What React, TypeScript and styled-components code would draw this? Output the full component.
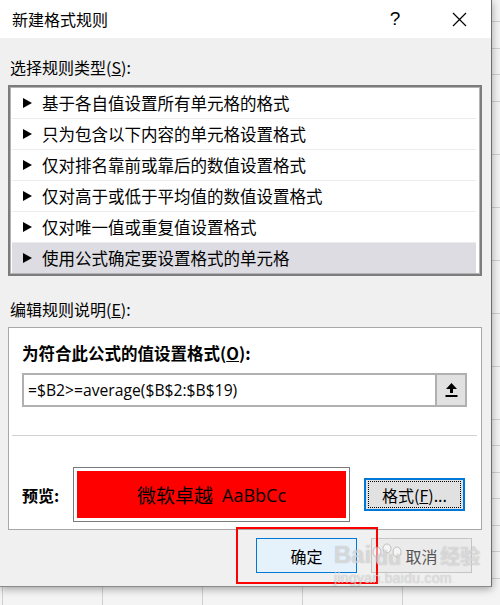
import styled, { createGlobalStyle } from "styled-components";

const GlobalStyle = createGlobalStyle`
  html, body {
    margin: 0;
    height: 100%;
  }
  body {
    font-family: "Noto Sans", "Noto Sans CJK SC", sans-serif;
    color: #000;
    background-color: #f4f4f4;
    background-image:
      repeating-linear-gradient(to bottom, transparent 0 25.5px, #d0d0d0 25.5px 26.5px),
      repeating-linear-gradient(to right, #d0d0d0 0 1px, transparent 1px 100px);
    background-position: 0 -4px, 2px 0;
    overflow: hidden;
  }
`;

const Dialog = styled.div`
  position: relative;
  width: 492px;
  height: 587px;
  box-sizing: border-box;
  background: #f0f0f0;
  border-right: 1px solid #6e6e6e;
  border-bottom: 1px solid #8a8a8a;
  box-shadow: 0 2px 8px rgba(0, 0, 0, 0.35);
  display: flex;
  flex-direction: column;
`;

const TitleBar = styled.div`
  height: 38px;
  background: #fff;
  display: flex;
  align-items: center;
  padding: 0 9px 0 12px;
  font-family: "Noto Sans CJK SC", sans-serif;
  font-size: 16px;
`;

const Title = styled.div`
  flex: 1;
`;

const HelpButton = styled.div`
  width: 46px;
  margin-right: 18px;
  text-align: center;
  font-family: "Liberation Sans", sans-serif;
  font-size: 19px;
`;

const CloseButton = styled.div`
  width: 46px;
  height: 38px;
  display: flex;
  align-items: center;
  justify-content: center;
`;

const Content = styled.div`
  flex: 1;
  padding: 0 9px 0 8px;
  display: flex;
  flex-direction: column;
`;

const SectionLabel = styled.div<{ $top: number }>`
  margin-top: ${(p) => p.$top}px;
  line-height: 22px;
  font-family: "Noto Sans CJK SC", sans-serif;
  font-size: 16px;
  padding-left: 2px;
`;

const RuleList = styled.div`
  margin-top: 7px;
  background: #fff;
  border: 2px solid #7c7c7c;
  box-shadow: inset 0 0 0 1px #b4b4b4;
  padding: 1px 4px 1px 2px;
  display: flex;
  flex-direction: column;
`;

const RuleRow = styled.div<{ $selected?: boolean }>`
  height: 30px;
  display: flex;
  align-items: center;
  padding-left: 11px;
  gap: 10px;
  background: ${(p) => (p.$selected ? "#dcdce2" : "#fff")};
  font-family: "Noto Sans CJK SC", sans-serif;
  font-size: 16.5px;
  & + & {
    border-top: 1px solid #ececec;
  }
`;

const Arrow = styled.span`
  width: 0;
  height: 0;
  border-left: 9px solid #000;
  border-top: 5px solid transparent;
  border-bottom: 5px solid transparent;
`;

const DescBox = styled.div`
  margin-top: 7px;
  background: #fff;
  border: 1px solid #a8a8a8;
  padding: 14px 14px 7px 13px;
  display: flex;
  flex-direction: column;
`;

const BoldLabel = styled.div`
  line-height: 22px;
  font-family: "Noto Sans CJK SC", sans-serif;
  font-size: 16.5px;
  font-weight: 700;
`;

const FormulaInput = styled.div`
  margin-top: 9px;
  height: 34px;
  box-sizing: border-box;
  border: 2px solid #b0b0b0;
  display: flex;
  align-items: stretch;
`;

const FormulaText = styled.div`
  flex: 1;
  display: flex;
  align-items: center;
  padding-left: 4px;
  font-family: "Open Sans", "Noto Sans", sans-serif;
  font-size: 15.7px;
`;

const CollapseButton = styled.div`
  width: 28px;
  background: #e1e1e1;
  border-left: 2px solid #b0b0b0;
  display: flex;
  align-items: center;
  justify-content: center;
`;

const Divider = styled.div`
  margin: 28px -10px 0 -10px;
  height: 1px;
  background: #d2d2d2;
`;

const PreviewRow = styled.div`
  margin-top: 31px;
  height: 55px;
  display: flex;
  align-items: center;
`;

const PreviewLabel = styled.div`
  width: 51px;
  font-family: "Noto Sans CJK SC", sans-serif;
  font-size: 16px;
  font-weight: 700;
`;

const PreviewFrame = styled.div`
  width: 277px;
  height: 55px;
  box-sizing: border-box;
  border: 1px solid #7a7a7a;
  padding: 3px;
  background: #fff;
`;

const PreviewFill = styled.div`
  height: 100%;
  background: #ff0000;
  display: flex;
  align-items: center;
  justify-content: center;
  gap: 9px;
  font-family: "Noto Sans CJK SC", sans-serif;
  font-size: 19px;
  span {
    font-family: "Open Sans", "Noto Sans", sans-serif;
    font-size: 18px;
  }
`;

const Button = styled.div<{ $variant?: "default" | "focus" | "muted" }>`
  width: 101px;
  height: 35px;
  box-sizing: border-box;
  display: flex;
  align-items: center;
  justify-content: center;
  font-family: "Noto Sans CJK SC", sans-serif;
  font-size: 16px;
  background: ${(p) =>
    p.$variant === "default" ? "#e5f1fb" : p.$variant === "muted" ? "#ebebeb" : "#e1e1e1"};
  border: ${(p) =>
    p.$variant === "focus"
      ? "2px solid #0078d7"
      : p.$variant === "default"
      ? "1px solid #0078d7"
      : "1px solid #c4c4c4"};
  color: ${(p) => (p.$variant === "muted" ? "#555" : "#000")};
`;

const FocusRing = styled.div`
  width: 100%;
  height: 100%;
  box-sizing: border-box;
  margin: 1px;
  border: 1px dotted #000;
  display: flex;
  align-items: center;
  justify-content: center;
`;

const FormatButton = styled(Button)`
  margin-left: 14px;
  height: 33px;
  padding: 1px;
`;

const ButtonRow = styled.div`
  margin-top: 8px;
  display: flex;
  justify-content: flex-end;
  gap: 14px;
  padding-right: 10px;
`;

const Highlight = styled.div`
  position: absolute;
  left: 236px;
  top: 527px;
  width: 142px;
  height: 57px;
  box-sizing: border-box;
  border: 2px solid #ff0000;
  pointer-events: none;
`;

const Watermark = styled.div`
  position: absolute;
  left: 334px;
  top: 528px;
  width: 160px;
  white-space: nowrap;
  pointer-events: none;
  color: rgba(255, 255, 255, 0.55);
  text-shadow: 0 0 1px rgba(120, 120, 120, 0.6);
  font-family: "Liberation Sans", "Noto Sans CJK SC", sans-serif;
`;

const MarkTop = styled.div`
  display: flex;
  align-items: flex-end;
  font-size: 24px;
  font-weight: 700;
  line-height: 30px;
  padding-top: 8px;
`;

const Paw = styled.div`
  position: relative;
  width: 30px;
  height: 34px;
  margin-left: 1px;
  span {
    position: absolute;
    left: 3px;
    bottom: 0;
    font-size: 21px;
    line-height: 24px;
  }
`;

const MarkWord = styled.span`
  margin-left: 38px;
  font-size: 20px;
  line-height: 26px;
`;

const MarkUrl = styled.div`
  font-size: 14px;
  line-height: 16px;
  letter-spacing: 0.3px;
`;

const rules = [
  "基于各自值设置所有单元格的格式",
  "只为包含以下内容的单元格设置格式",
  "仅对排名靠前或靠后的数值设置格式",
  "仅对高于或低于平均值的数值设置格式",
  "仅对唯一值或重复值设置格式",
  "使用公式确定要设置格式的单元格",
];

function App() {
  return (
    <>
      <GlobalStyle />
      <Dialog>
        <TitleBar>
          <Title>新建格式规则</Title>
          <HelpButton>?</HelpButton>
          <CloseButton>
            <svg width="15" height="15" viewBox="0 0 15 15">
              <path d="M1 1 L14 14 M14 1 L1 14" stroke="#000" strokeWidth="1.2" fill="none" />
            </svg>
          </CloseButton>
        </TitleBar>
        <Content>
          <SectionLabel $top={18}>
            选择规则类型(<u>S</u>):
          </SectionLabel>
          <RuleList>
            {rules.map((rule, n) => (
              <RuleRow key={n} $selected={n === rules.length - 1}>
                <Arrow />
                {rule}
              </RuleRow>
            ))}
          </RuleList>
          <SectionLabel $top={22}>
            编辑规则说明(<u>E</u>):
          </SectionLabel>
          <DescBox>
            <BoldLabel>
              为符合此公式的值设置格式(<u>O</u>):
            </BoldLabel>
            <FormulaInput>
              <FormulaText>=$B2&gt;=average($B$2:$B$19)</FormulaText>
              <CollapseButton>
                <svg width="13" height="14" viewBox="0 0 13 14">
                  <path d="M6.5 0 L12 6 L8 6 L8 10 L5 10 L5 6 L1 6 Z" fill="#000" />
                  <rect x="0.5" y="12" width="12" height="2" fill="#000" />
                </svg>
              </CollapseButton>
            </FormulaInput>
            <Divider />
            <PreviewRow>
              <PreviewLabel>预览:</PreviewLabel>
              <PreviewFrame>
                <PreviewFill>
                  微软卓越<span>AaBbCc</span>
                </PreviewFill>
              </PreviewFrame>
              <FormatButton $variant="focus">
                <FocusRing>
                  格式(<u>F</u>)...
                </FocusRing>
              </FormatButton>
            </PreviewRow>
          </DescBox>
          <ButtonRow>
            <Button $variant="default">确定</Button>
            <Button $variant="muted">取消</Button>
          </ButtonRow>
        </Content>
        <Highlight />
        <Watermark>
          <MarkTop>
            <span>Bai</span>
            <Paw>
              <svg width="30" height="16" viewBox="0 0 30 16">
                <g fill="rgba(255,255,255,0.5)" stroke="rgba(130,130,130,0.45)" strokeWidth="1">
                  <ellipse cx="5" cy="9" rx="4" ry="5" />
                  <ellipse cx="15" cy="5.5" rx="4" ry="4.5" />
                  <ellipse cx="25" cy="9" rx="4" ry="5" />
                </g>
              </svg>
              <span>du</span>
            </Paw>
            <MarkWord>经验</MarkWord>
          </MarkTop>
          <MarkUrl>jingyan.baidu.com</MarkUrl>
        </Watermark>
      </Dialog>
    </>
  );
}

export default App;
